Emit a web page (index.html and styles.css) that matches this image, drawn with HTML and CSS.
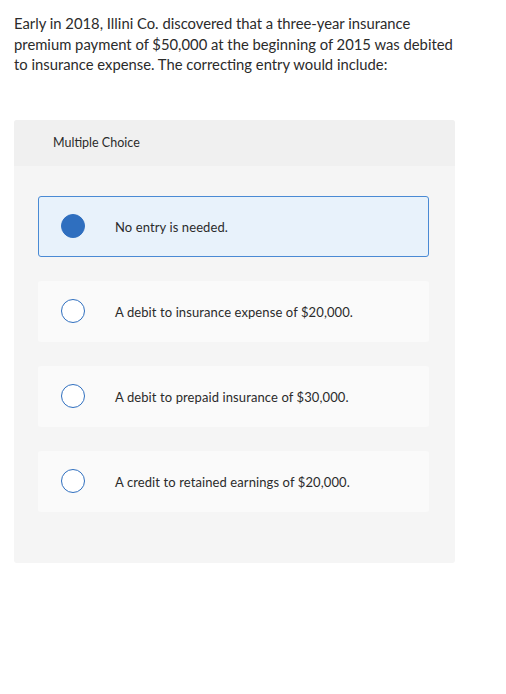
FILE: index.html
```html
<!DOCTYPE html>
<html>
<head>
<meta charset="utf-8">
<link rel="stylesheet" href="styles.css">
</head>
<body>
<p class="question">Early in 2018, Illini Co. discovered that a three-year insurance premium payment of $50,000 at the beginning of 2015 was debited to insurance expense. The correcting entry would include:</p>
<div class="panel">
  <div class="panel-head">Multiple Choice</div>
  <div class="panel-body">
    <div class="option selected"><span class="radio"></span><span class="label">No entry is needed.</span></div>
    <div class="option"><span class="radio"></span><span class="label">A debit to insurance expense of $20,000.</span></div>
    <div class="option"><span class="radio"></span><span class="label">A debit to prepaid insurance of $30,000.</span></div>
    <div class="option"><span class="radio"></span><span class="label">A credit to retained earnings of $20,000.</span></div>
  </div>
</div>
</body>
</html>
```
FILE: styles.css
```css
html, body { margin: 0; padding: 0; background: #fff; }
body {
  font-family: "Lato", "Liberation Sans", sans-serif;
  color: #2b2b2b;
  padding: 13px 0 0 14px;
  width: 442px;
}
.question {
  margin: 0;
  font-size: 14.8px;
  line-height: 20.5px;
  width: 442px;
}
.panel {
  margin-top: 45px;
  width: 441px;
  border-radius: 3px;
  overflow: hidden;
  background: #f5f5f5;
}
.panel-head {
  background: #f0f0f0;
  height: 46px;
  display: flex;
  align-items: center;
  padding-left: 39px;
  font-size: 12.5px;
}
.panel-body {
  padding: 30px 26px 51px 24px;
  display: flex;
  flex-direction: column;
  gap: 24px;
}
.option {
  height: 61px;
  box-sizing: border-box;
  background: #fafafa;
  border-radius: 3px;
  display: flex;
  align-items: center;
  padding-left: 23px;
  padding-top: 2px;
  font-size: 13px;
  letter-spacing: 0.1px;
}
.option.selected {
  background: #e8f2fb;
  border: 1px solid #4a8ad4;
  padding-left: 22px;
  padding-top: 0;
}
.radio {
  width: 22px;
  height: 22px;
  border: 1.5px solid #2f6fbf;
  border-radius: 50%;
  flex: none;
  background: #fff;
  margin-top: -2px;
}
.option.selected .radio { background: #2f6fbf; margin-top: 0; }
.label { margin-left: 30px; }
.option.selected .label { margin-top: 2px; }
```
